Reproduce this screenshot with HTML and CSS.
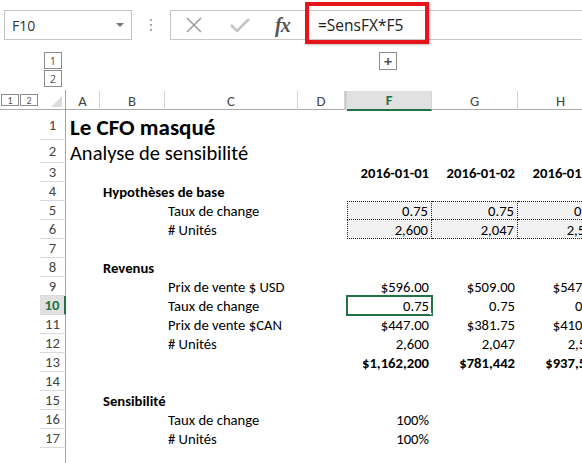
FILE: index.html
```html
<!DOCTYPE html>
<html lang="fr">
<head>
    <meta charset="UTF-8">
    <title>Le CFO masqué - Analyse de sensibilité</title>
    <link rel="stylesheet" href="styles.css">
</head>
<body>
    <div class="toolbar">
        <div class="name-box">
            <span>F10</span>
            <span class="name-arrow"></span>
        </div>
        <div class="grip"><i></i><i></i><i></i></div>
        <div class="formula-bar">
            <div class="formula-icons">
                <svg class="icon-cancel" width="18" height="18" viewBox="0 0 18 18">
                    <path d="M2 2 L16 16 M16 2 L2 16" stroke="#9e9e9e" stroke-width="1.6" fill="none"/>
                </svg>
                <svg class="icon-enter" width="20" height="16" viewBox="0 0 20 16">
                    <path d="M1 8 L7 14 L19 2" stroke="#c4c4c4" stroke-width="2.6" fill="none"/>
                </svg>
                <span class="icon-fx">fx</span>
            </div>
            <div class="formula-input">=SensFX*F5</div>
        </div>
        <div class="callout"></div>
    </div>

    <div class="outline-bar">
        <div class="outline-levels">
            <span class="level-btn">1</span>
            <span class="level-btn">2</span>
        </div>
        <span class="expand-btn">+</span>
    </div>

    <div class="sheet">
        <div class="row col-head">
            <div class="gutter">
                <span class="level-btn small">1</span>
                <span class="level-btn small">2</span>
            </div>
            <div class="corner"><span></span></div>
            <div class="ch">A</div>
            <div class="ch">B</div>
            <div class="ch">C</div>
            <div class="ch">D</div>
            <div class="ch hidden-col"></div>
            <div class="ch active">F</div>
            <div class="ch">G</div>
            <div class="ch">H</div>
        </div>

        <div class="row r-title">
            <div class="gutter"></div><div class="rh">1</div>
            <div class="c span-all title">Le CFO masqué</div>
        </div>
        <div class="row r-sub">
            <div class="gutter"></div><div class="rh">2</div>
            <div class="c span-all subtitle">Analyse de sensibilité</div>
        </div>
        <div class="row">
            <div class="gutter"></div><div class="rh">3</div>
            <div class="c"></div><div class="c"></div><div class="c"></div><div class="c"></div><div class="c"></div>
            <div class="c num bold">2016-01-01</div>
            <div class="c num bold">2016-01-02</div>
            <div class="c num bold">2016-01-03</div>
        </div>
        <div class="row">
            <div class="gutter"></div><div class="rh">4</div>
            <div class="c"></div>
            <div class="c bold over">Hypothèses de base</div>
        </div>
        <div class="row inputs-top">
            <div class="gutter"></div><div class="rh">5</div>
            <div class="c"></div><div class="c"></div>
            <div class="c">Taux de change</div>
            <div class="c"></div><div class="c"></div>
            <div class="c num input">0.75</div>
            <div class="c num input">0.75</div>
            <div class="c num input">0.75</div>
        </div>
        <div class="row">
            <div class="gutter"></div><div class="rh">6</div>
            <div class="c"></div><div class="c"></div>
            <div class="c"># Unités</div>
            <div class="c"></div><div class="c"></div>
            <div class="c num input">2,600</div>
            <div class="c num input">2,047</div>
            <div class="c num input">2,500</div>
        </div>
        <div class="row">
            <div class="gutter"></div><div class="rh">7</div>
        </div>
        <div class="row">
            <div class="gutter"></div><div class="rh">8</div>
            <div class="c"></div>
            <div class="c bold over">Revenus</div>
        </div>
        <div class="row">
            <div class="gutter"></div><div class="rh">9</div>
            <div class="c"></div><div class="c"></div>
            <div class="c">Prix de vente $ USD</div>
            <div class="c"></div><div class="c"></div>
            <div class="c num">$596.00</div>
            <div class="c num">$509.00</div>
            <div class="c num">$547.00</div>
        </div>
        <div class="row">
            <div class="gutter"></div><div class="rh active">10</div>
            <div class="c"></div><div class="c"></div>
            <div class="c">Taux de change</div>
            <div class="c"></div><div class="c"></div>
            <div class="c num selected">0.75<span class="fill-handle"></span></div>
            <div class="c num">0.75</div>
            <div class="c num">0.75</div>
        </div>
        <div class="row">
            <div class="gutter"></div><div class="rh">11</div>
            <div class="c"></div><div class="c"></div>
            <div class="c">Prix de vente $CAN</div>
            <div class="c"></div><div class="c"></div>
            <div class="c num">$447.00</div>
            <div class="c num">$381.75</div>
            <div class="c num">$410.25</div>
        </div>
        <div class="row">
            <div class="gutter"></div><div class="rh">12</div>
            <div class="c"></div><div class="c"></div>
            <div class="c"># Unités</div>
            <div class="c"></div><div class="c"></div>
            <div class="c num">2,600</div>
            <div class="c num">2,047</div>
            <div class="c num">2,500</div>
        </div>
        <div class="row">
            <div class="gutter"></div><div class="rh">13</div>
            <div class="c"></div><div class="c"></div><div class="c"></div><div class="c"></div><div class="c"></div>
            <div class="c num bold">$1,162,200</div>
            <div class="c num bold">$781,442</div>
            <div class="c num bold">$937,500</div>
        </div>
        <div class="row">
            <div class="gutter"></div><div class="rh">14</div>
        </div>
        <div class="row">
            <div class="gutter"></div><div class="rh">15</div>
            <div class="c"></div>
            <div class="c bold over">Sensibilité</div>
        </div>
        <div class="row">
            <div class="gutter"></div><div class="rh">16</div>
            <div class="c"></div><div class="c"></div>
            <div class="c">Taux de change</div>
            <div class="c"></div><div class="c"></div>
            <div class="c num">100%</div>
        </div>
        <div class="row">
            <div class="gutter"></div><div class="rh">17</div>
            <div class="c"></div><div class="c"></div>
            <div class="c"># Unités</div>
            <div class="c"></div><div class="c"></div>
            <div class="c num">100%</div>
        </div>
        <div class="row">
            <div class="gutter"></div><div class="rh"></div>
        </div>
    </div>
</body>
</html>
```

FILE: styles.css
```css
* {
    margin: 0;
    padding: 0;
    box-sizing: border-box;
}

body {
    width: 582px;
    height: 463px;
    overflow: hidden;
    background-color: #fff;
    font-family: 'Open Sans', 'Noto Sans', sans-serif;
    color: #222;
}

/* ---------- formula toolbar ---------- */

.toolbar {
    position: relative;
    height: 45px;
    display: flex;
    align-items: flex-start;
    padding-top: 10px;
    padding-left: 4px;
}

.name-box {
    width: 128px;
    height: 30px;
    border: 1px solid #c6c6c6;
    display: flex;
    align-items: center;
    justify-content: space-between;
    padding: 0 7px 0 7px;
    font-size: 14px;
    color: #333;
}

.name-arrow {
    width: 0;
    height: 0;
    border-left: 4px solid transparent;
    border-right: 4px solid transparent;
    border-top: 4px solid #777;
}

.grip {
    width: 38px;
    height: 30px;
    display: flex;
    flex-direction: column;
    align-items: center;
    justify-content: center;
    gap: 3px;
}

.grip i {
    display: block;
    width: 2px;
    height: 2px;
    background-color: #a6a6a6;
}

.formula-bar {
    flex: 1;
    height: 30px;
    border: 1px solid #c6c6c6;
    border-right: none;
    display: flex;
}

.formula-icons {
    width: 135px;
    display: flex;
    align-items: center;
    padding-left: 14px;
}

.icon-cancel {
    margin-right: 27px;
}

.icon-enter {
    margin-right: 25px;
}

.icon-fx {
    font-family: 'Liberation Serif', serif;
    font-style: italic;
    font-weight: bold;
    font-size: 20px;
    color: #555;
    letter-spacing: -1px;
}

.formula-input {
    flex: 1;
    border-left: 1px dotted #d0d0d0;
    padding-left: 11px;
    font-size: 15.5px;
    line-height: 29px;
    color: #222;
}

/* red annotation around the formula */
.callout {
    position: absolute;
    left: 305px;
    top: 2px;
    width: 124px;
    height: 42px;
    border: 4px solid #e8141c;
    box-shadow: 1px 1px 2px rgba(0, 0, 0, 0.25);
}

/* ---------- outline level area ---------- */

.outline-bar {
    position: relative;
    height: 45px;
}

.outline-levels {
    position: absolute;
    left: 44px;
    top: 7px;
    display: flex;
    flex-direction: column;
    gap: 1px;
}

.level-btn {
    display: flex;
    align-items: center;
    justify-content: center;
    width: 18px;
    height: 17px;
    border: 1px solid #8c8c8c;
    font-size: 11px;
    color: #555;
    background-color: #fff;
}

.expand-btn {
    position: absolute;
    left: 379px;
    top: 7px;
    width: 18px;
    height: 18px;
    border: 1px solid #8c8c8c;
    display: flex;
    align-items: center;
    justify-content: center;
    font-size: 15px;
    font-weight: bold;
    color: #555;
    line-height: 1;
}

/* ---------- sheet grid ---------- */

.sheet {
    --cols: 40px 26px 34px 65px 133px 47px 2px 85px 86px 86px;
}

.row {
    display: grid;
    grid-template-columns: var(--cols);
    height: 19px;
    font-family: Carlito, Lato, sans-serif;
    font-size: 14.67px;
    color: #000;
}

.r-title {
    height: 30px;
}

.r-sub {
    height: 23px;
}

.gutter {
    grid-column: 1;
}

.rh {
    grid-column: 2;
    border-right: 1px solid #a5a5a5;
    border-bottom: 1px solid #dadada;
    font-size: 14.67px;
    color: #444;
    display: flex;
    align-items: center;
    justify-content: center;
}

.rh.active {
    background-color: #e1e1e1;
    border-right: 2px solid #217346;
    color: #217346;
    font-weight: bold;
}

.c {
    padding: 0 3px 1px;
    white-space: nowrap;
    overflow: hidden;
    display: flex;
    align-items: flex-end;
    line-height: 15px;
}

.c.over {
    overflow: visible;
    grid-column: span 2;
}

.c.num {
    justify-content: flex-end;
}

.bold {
    font-weight: bold;
}

.span-all {
    grid-column: 3 / -1;
    overflow: visible;
}

.title {
    font-size: 23px;
    font-weight: bold;
    line-height: 23px;
    padding: 0 0 1px 4px;
}

.subtitle {
    font-size: 20.5px;
    line-height: 20px;
    padding: 0 0 0 4px;
}

.input {
    background-color: #f2f2f2;
    border-right: 1px dotted #222;
    border-bottom: 1px dotted #222;
    padding-bottom: 0;
}

.inputs-top .input {
    border-top: 1px dotted #222;
}

.input:nth-child(8) {
    border-left: 1px dotted #222;
}

.selected {
    position: relative;
    outline: 2px solid #217346;
    outline-offset: -1px;
}

.fill-handle {
    position: absolute;
    right: -4px;
    bottom: -4px;
    width: 6px;
    height: 6px;
    background-color: #217346;
    border: 1px solid #fff;
}

/* column headers */
.col-head {
    height: 20px;
    border-bottom: 1px solid #ababab;
}

.col-head .gutter {
    display: flex;
    gap: 1px;
    padding-left: 1px;
    align-items: center;
}

.level-btn.small {
    width: 18px;
    height: 12px;
    font-size: 10px;
}

.corner {
    border-right: 1px solid #a5a5a5;
    position: relative;
}

.corner span {
    position: absolute;
    right: 3px;
    bottom: 3px;
    width: 0;
    height: 0;
    border-left: 11px solid transparent;
    border-bottom: 11px solid #dcdcdc;
}

.ch {
    display: flex;
    align-items: center;
    justify-content: center;
    border-right: 1px solid #d4d4d4;
    font-size: 14.67px;
    color: #444;
    margin-top: 1px;
}

.ch.hidden-col {
    border-left: 1px solid #c8c8c8;
}

.ch.active {
    background-color: #e1e1e1;
    border-bottom: 2px solid #217346;
    color: #217346;
    font-weight: bold;
    margin-bottom: -1px;
}
```
